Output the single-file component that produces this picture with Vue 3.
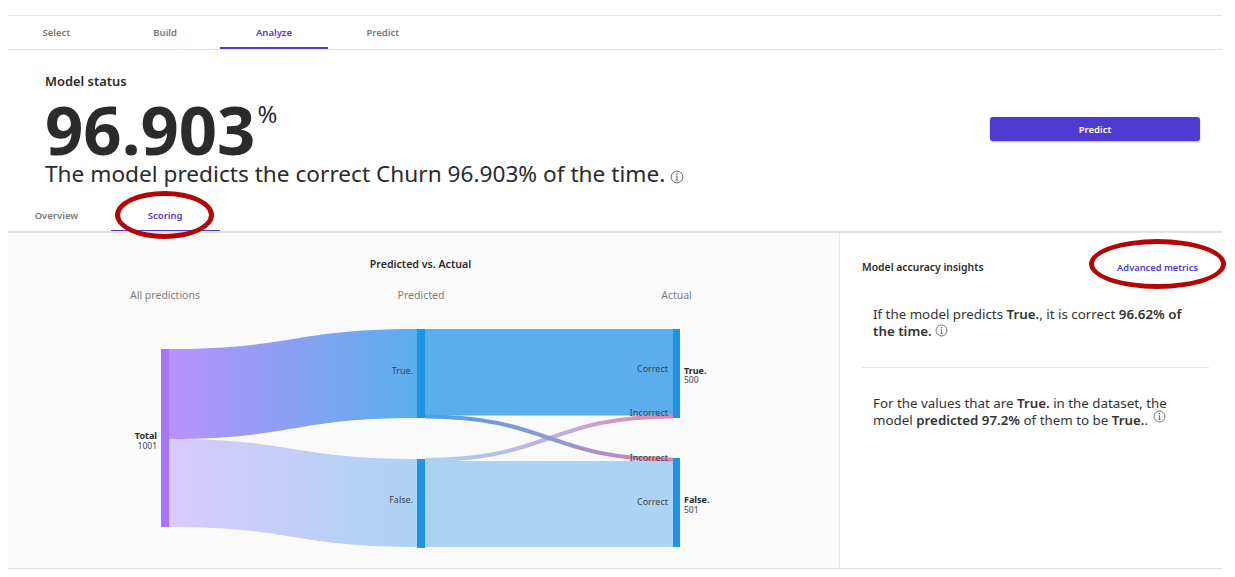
<template>
  <div class="page">
    <nav class="tabs main-tabs">
      <a v-for="t in mainTabs" :key="t" class="tab" :class="{ active: t === 'Analyze' }">{{ t }}</a>
    </nav>

    <section class="status">
      <div class="status-text">
        <h2 class="status-title">Model status</h2>
        <div class="score">96.903<span class="unit">%</span></div>
        <p class="summary">
          The model predicts the correct Churn 96.903% of the time.
          <svg class="info big" viewBox="0 0 16 16">
            <circle cx="8" cy="8" r="6.7" />
            <path d="M8 7v4.6M6.6 11.6h2.8M6.8 7H8" />
            <circle class="dot" cx="8" cy="4.7" r="0.9" />
          </svg>
        </p>
      </div>
      <button class="predict-btn">Predict</button>
    </section>

    <nav class="tabs sub-tabs">
      <a v-for="t in subTabs" :key="t" class="tab" :class="{ active: t === 'Scoring' }">{{ t }}</a>
      <span class="ring ring-scoring"></span>
    </nav>

    <div class="content">
      <div class="chart-panel">
        <svg class="sankey" width="831" height="335" viewBox="8 233 831 335">
          <defs>
            <linearGradient id="flowTop" x1="0" x2="1" y1="0" y2="0">
              <stop offset="0" stop-color="#b892fc" />
              <stop offset="1" stop-color="#5baeeb" />
            </linearGradient>
            <linearGradient id="flowBottom" x1="0" x2="1" y1="0" y2="0">
              <stop offset="0" stop-color="#d9cafb" />
              <stop offset="1" stop-color="#acd3f3" />
            </linearGradient>
            <linearGradient id="crossDark" x1="0" x2="1" y1="0" y2="0">
              <stop offset="0" stop-color="#4f9fe2" />
              <stop offset="0.5" stop-color="#8c9ad0" />
              <stop offset="1" stop-color="#ea82ad" />
            </linearGradient>
            <linearGradient id="crossLight" x1="0" x2="1" y1="0" y2="0">
              <stop offset="0" stop-color="#acd3f3" />
              <stop offset="0.5" stop-color="#b9b4de" />
              <stop offset="1" stop-color="#ea82ad" />
            </linearGradient>
          </defs>

          <text class="chart-title" x="420.5" y="268" text-anchor="middle">Predicted vs. Actual</text>
          <text class="col-label" x="165" y="298.500" text-anchor="middle">All predictions</text>
          <text class="col-label" x="421" y="298.500" text-anchor="middle">Predicted</text>
          <text class="col-label" x="676.5" y="298.500" text-anchor="middle">Actual</text>

          <path d="M169 349C293 349 293 329 417 329V418C293 418 293 439 169 439Z" fill="url(#flowTop)" />
          <path d="M169 439C293 439 293 459 417 459V547C293 547 293 527 169 527Z" fill="url(#flowBottom)" />
          <rect x="425" y="329" width="248" height="86.5" fill="#5baeeb" />
          <rect x="425" y="461" width="248" height="86" fill="#acd3f3" />
          <path d="M425 460C549 460 549 416.500 673 416.500" class="cross" stroke="url(#crossLight)" />
          <path d="M425 416.500C549 416.500 549 459.500 673 459.500" class="cross" stroke="url(#crossDark)" />

          <rect v-for="n in nodes" :key="n.x + '-' + n.y" :x="n.x" :y="n.y" :width="n.w" :height="n.h" :fill="n.fill" />

          <text class="node-text" x="413" y="374" text-anchor="end">True.</text>
          <text class="node-text" x="413" y="503" text-anchor="end">False.</text>
          <text class="node-text" x="668" y="372" text-anchor="end">Correct</text>
          <text class="node-text" x="668" y="416" text-anchor="end">Incorrect</text>
          <text class="node-text" x="668" y="461" text-anchor="end">Incorrect</text>
          <text class="node-text" x="668" y="505" text-anchor="end">Correct</text>

          <text class="node-name" x="157" y="439" text-anchor="end">Total</text>
          <text class="node-count" x="157" y="449" text-anchor="end">1001</text>
          <text class="node-name" x="684" y="374">True.</text>
          <text class="node-count" x="684" y="383">500</text>
          <text class="node-name" x="684" y="503">False.</text>
          <text class="node-count" x="684" y="513">501</text>
        </svg>
      </div>

      <aside class="insights">
        <div class="insights-head">
          <h3>Model accuracy insights</h3>
          <a class="link">Advanced metrics</a>
          <span class="ring ring-metrics"></span>
        </div>
        <p class="insight">
          If the model predicts <b>True.</b>, it is correct <b>96.62% of the time.</b>
          <svg class="info" viewBox="0 0 16 16">
            <circle cx="8" cy="8" r="6.7" />
            <path d="M8 7v4.6M6.6 11.6h2.8M6.8 7H8" />
            <circle class="dot" cx="8" cy="4.7" r="0.9" />
          </svg>
        </p>
        <hr />
        <p class="insight">
          For the values that are <b>True.</b> in the dataset, the model <b>predicted 97.2%</b> of them to be <b>True.</b>.
          <svg class="info raised" viewBox="0 0 16 16">
            <circle cx="8" cy="8" r="6.7" />
            <path d="M8 7v4.6M6.6 11.6h2.8M6.8 7H8" />
            <circle class="dot" cx="8" cy="4.7" r="0.9" />
          </svg>
        </p>
      </aside>
    </div>
  </div>
</template>

<script setup>
const mainTabs = ['Select', 'Build', 'Analyze', 'Predict']
const subTabs = ['Overview', 'Scoring']

const nodes = [
  { x: 161, y: 349, w: 8, h: 178, fill: '#a874fd' },
  { x: 417, y: 329, w: 8, h: 89, fill: '#1f93e6' },
  { x: 417, y: 459, w: 8, h: 89, fill: '#1f93e6' },
  { x: 673, y: 329, w: 7, h: 89, fill: '#1f93e6' },
  { x: 673, y: 458, w: 7, h: 89, fill: '#1f93e6' }
]
</script>

<style scoped>
.page {
  width: 1235px;
  height: 577px;
  box-sizing: border-box;
  padding-top: 15px;
  font-family: "Noto Sans", "Open Sans", sans-serif;
  color: #2b2b2b;
  background: #fff;
  overflow: hidden;
}

.tabs {
  position: relative;
  display: flex;
  margin: 0 13px 0 8px;
}

.main-tabs {
  height: 33px;
  border-top: 1px solid #e6e6e6;
  border-bottom: 1px solid #e6e6e6;
}

.sub-tabs {
  height: 32px;
  border-bottom: 2px solid #e2e2e2;
}

.tab {
  flex: 0 0 108.800px;
  display: flex;
  align-items: center;
  justify-content: center;
  box-sizing: border-box;
  font-size: 9.500px;
  font-weight: 600;
  color: #7a7a7a;
}

.main-tabs .tab:first-child,
.sub-tabs .tab:first-child {
  margin-left: -6px;
}

.tab.active {
  color: #4f3bd3;
  box-shadow: inset 0 -2px 0 #4f3bd3;
}

.sub-tabs .tab.active {
  box-shadow: inset 0 -1px 0 #4f3bd3;
}

.status {
  display: flex;
  justify-content: space-between;
  align-items: flex-start;
  height: 149px;
  box-sizing: border-box;
  padding: 23px 35px 0 45px;
}

.status-title {
  margin: 0;
  font-size: 12.900px;
  line-height: 16px;
  font-weight: 600;
}

.score {
  position: relative;
  margin-top: 5px;
  font-size: 67px;
  line-height: 70px;
  font-weight: 700;
}

.unit {
  position: absolute;
  top: 7px;
  margin-left: 2px;
  font-size: 24px;
  line-height: 26px;
  font-weight: 400;
}

.summary {
  margin: -6px 0 0;
  font-size: 22.650px;
  line-height: 32px;
  white-space: nowrap;
}

.predict-btn {
  width: 210px;
  height: 24px;
  margin-top: 44px;
  border: 0;
  border-radius: 3px;
  background: #4f3bd0;
  box-shadow: 0 1px 2px rgba(0, 0, 0, 0.3);
  color: #fff;
  font-family: inherit;
  font-size: 9.500px;
  font-weight: 600;
}

.info {
  width: 13px;
  height: 13px;
  margin-left: 3px;
  vertical-align: -1px;
  fill: none;
  stroke: #555;
  stroke-width: 1;
}

.info.big {
  width: 14px;
  height: 14px;
  margin-left: -1px;
  vertical-align: -2px;
}

.info.raised {
  position: relative;
  top: -3px;
  margin-left: 1px;
}

.info .dot {
  fill: #555;
  stroke: none;
}

.content {
  display: flex;
  height: 335px;
  margin: 0 13px 0 8px;
  border-bottom: 1px solid #e2e2e2;
}

.chart-panel {
  width: 831px;
  background: #fafafa;
}

.sankey {
  display: block;
}

.chart-title {
  font-size: 10.600px;
  font-weight: 600;
  fill: #2b2b2b;
}

.col-label {
  font-size: 10.500px;
  fill: #7d7d7d;
}

.cross {
  fill: none;
  stroke-width: 4px;
}

.node-text {
  font-size: 9px;
  fill: #3a4650;
}

.node-name {
  font-size: 9px;
  font-weight: 700;
  fill: #2b2b2b;
}

.node-count {
  font-size: 8.500px;
  fill: #444;
}

.insights {
  flex: 1;
  box-sizing: border-box;
  padding: 26px 13px 0 22px;
  border-left: 1px solid #e8e8e8;
}

.insights-head {
  position: relative;
  display: flex;
  justify-content: space-between;
  align-items: center;
  height: 16px;
  padding-right: 11px;
}

.insights-head h3 {
  margin: 0;
  font-size: 10.400px;
  font-weight: 600;
}

.link {
  font-size: 9.300px;
  font-weight: 600;
  color: #4f3bd3;
}

.insight {
  margin: 0;
  padding: 31px 20px 0 11px;
  font-size: 13.350px;
  line-height: 16.500px;
  color: #333;
}

.insight b {
  font-weight: 600;
}

hr {
  margin: 28px 0 0;
  border: 0;
  border-top: 1px solid #e4e4e4;
}

.insight:last-child {
  padding-top: 27px;
}

.ring {
  position: absolute;
  box-sizing: border-box;
  border: 5px solid #b30606;
  border-radius: 50%;
  pointer-events: none;
}

.ring-scoring {
  left: 107px;
  top: -8px;
  width: 99px;
  height: 48px;
}

.ring-metrics {
  right: -17px;
  top: -20px;
  width: 137px;
  height: 50px;
}
</style>
